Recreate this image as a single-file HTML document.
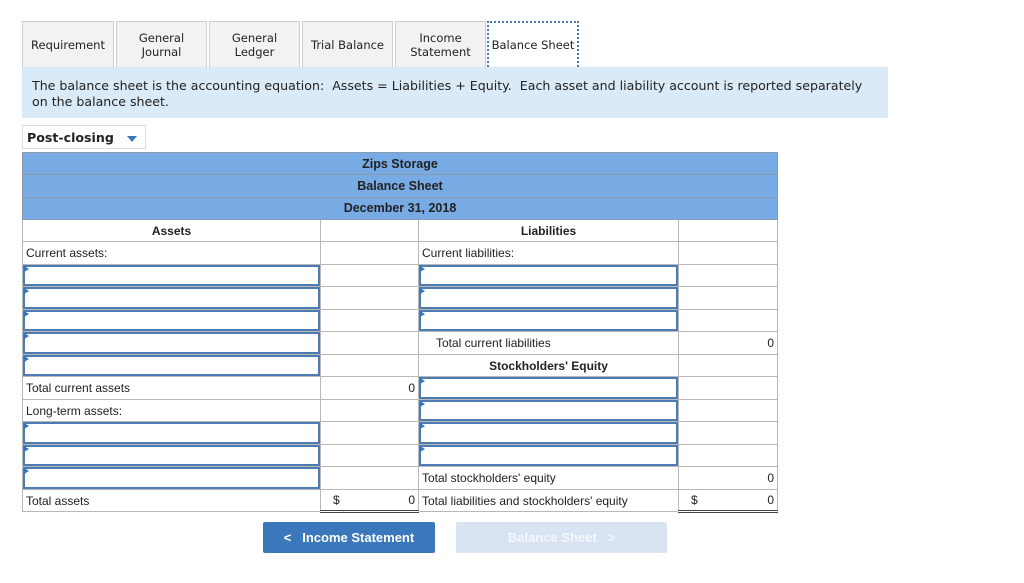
<!DOCTYPE html>
<html><head><meta charset="utf-8"><style>
*{box-sizing:border-box;margin:0;padding:0}
body{width:1024px;height:583px;background:#fff;font-family:"DejaVu Sans","Liberation Sans",sans-serif;position:relative;overflow:hidden;color:#222}
.tab{position:absolute;top:21px;height:46px;background:#f2f2f2;border:1px solid #d0d0d0;border-bottom:none;font-size:11.5px;text-align:center;display:flex;align-items:center;justify-content:center;line-height:14px}
.info{position:absolute;left:22px;top:67px;width:866px;height:51px;background:#dbeaf7;font-size:12.6px;padding:11px 10px 0 10px;line-height:15.5px}
.sel{position:absolute;left:22px;top:125px;width:124px;height:24px;border:1px solid #ddd;font-weight:bold;font-size:12.6px;padding:4px 4px}
.sel:after{content:"";position:absolute;right:8px;top:10px;border:5px solid transparent;border-top:6px solid #3b77bd;border-bottom:none}
table{position:absolute;left:22px;top:152px;border-collapse:collapse;table-layout:fixed;font-family:"Liberation Sans",sans-serif;font-size:12px}
td{border:1px solid #b8b8b8;height:22.5px;padding:0 3px;position:relative;white-space:nowrap}
.h td{background:#78abe3;border-color:#8a9bb0;text-align:center;font-weight:bold;font-size:12.5px;color:#222;height:22.3px}
.b{font-weight:bold;text-align:center}
.r{text-align:right}
.in:before{content:"";position:absolute;left:0;top:0;right:0;bottom:0;border:2px solid #4e7bb0}
.in:after{content:"";position:absolute;left:1px;top:1px;border-left:5px solid #2f74c6;border-top:3px solid transparent;border-bottom:3px solid transparent}
.bt{border-bottom:3px double #444}
.btn{position:absolute;top:522px;height:31px;font-family:"Liberation Sans",sans-serif;font-weight:bold;font-size:13px;color:#fff;display:flex;align-items:center;justify-content:center;border-radius:2px}
</style></head><body>
<div class="tab" style="left:22px;width:92px">Requirement</div>
<div class="tab" style="left:116px;width:91px">General<br>Journal</div>
<div class="tab" style="left:209px;width:91px">General<br>Ledger</div>
<div class="tab" style="left:302px;width:91px">Trial Balance</div>
<div class="tab" style="left:395px;width:91px">Income<br>Statement</div>
<div class="tab" style="left:487px;width:92px;background:#fff;border:2px dotted #4a7ab5;border-bottom:none">Balance Sheet</div>
<div class="info">The balance sheet is the accounting equation:&nbsp; Assets = Liabilities + Equity.&nbsp; Each asset and liability account is reported separately on the balance sheet.</div>
<div class="sel">Post-closing</div>
<table>
<colgroup><col style="width:298px"><col style="width:98px"><col style="width:260px"><col style="width:99px"></colgroup>
<tr class="h"><td colspan="4">Zips Storage</td></tr>
<tr class="h"><td colspan="4">Balance Sheet</td></tr>
<tr class="h"><td colspan="4">December 31, 2018</td></tr>
<tr><td class="b">Assets</td><td></td><td class="b">Liabilities</td><td></td></tr>
<tr><td>Current assets:</td><td></td><td>Current liabilities:</td><td></td></tr>
<tr><td class="in"></td><td></td><td class="in"></td><td></td></tr>
<tr><td class="in"></td><td></td><td class="in"></td><td></td></tr>
<tr><td class="in"></td><td></td><td class="in"></td><td></td></tr>
<tr><td class="in"></td><td></td><td style="padding-left:17px">Total current liabilities</td><td class="r">0</td></tr>
<tr><td class="in"></td><td></td><td class="b">Stockholders' Equity</td><td></td></tr>
<tr><td>Total current assets</td><td class="r">0</td><td class="in"></td><td></td></tr>
<tr><td>Long-term assets:</td><td></td><td class="in"></td><td></td></tr>
<tr><td class="in"></td><td></td><td class="in"></td><td></td></tr>
<tr><td class="in"></td><td></td><td class="in"></td><td></td></tr>
<tr><td class="in"></td><td></td><td>Total stockholders' equity</td><td class="r">0</td></tr>
<tr><td>Total assets</td><td class="r bt"><span style="position:absolute;left:12px">$</span>0</td><td>Total liabilities and stockholders' equity</td><td class="r bt"><span style="position:absolute;left:12px">$</span>0</td></tr>
</table>
<div class="btn" style="left:263px;width:172px;background:#3a77bb">&lt;&nbsp;&nbsp;&nbsp;Income Statement</div>
<div class="btn" style="left:456px;width:211px;background:#d8e4f1;color:#f4f7fb">Balance Sheet&nbsp;&nbsp;&nbsp;&gt;</div>
</body></html>
